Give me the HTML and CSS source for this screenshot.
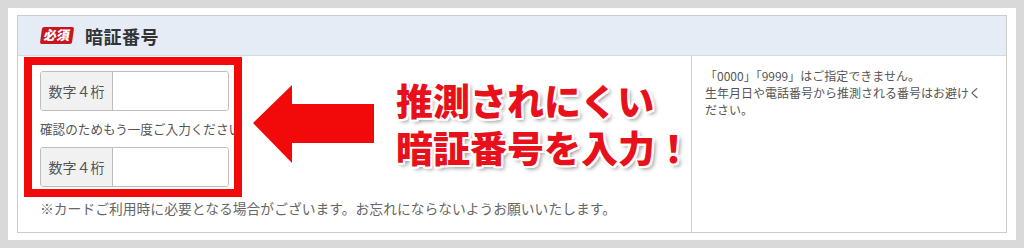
FILE: index.html
```html
<!DOCTYPE html>
<html lang="ja">
<head>
<meta charset="utf-8">
<link rel="stylesheet" href="styles.css">
</head>
<body>
<div class="page">
  <div class="sheet">
    <div class="panel">
      <div class="panel-head">
        <span class="badge">必須</span>
        <span class="title">暗証番号</span>
      </div>
      <div class="panel-body">
        <div class="form-col">
          <div class="group">
            <div class="addon">数字４桁</div>
            <div class="field"></div>
          </div>
          <div class="confirm">確認のためもう一度ご入力ください</div>
          <div class="group">
            <div class="addon">数字４桁</div>
            <div class="field"></div>
          </div>
          <div class="note">※カードご利用時に必要となる場合がございます。お忘れにならないようお願いいたします。</div>
        </div>
        <div class="help-col">
          <p>「0000」「9999」はご指定できません。<br>生年月日や電話番号から推測される番号はお避けください。</p>
        </div>
      </div>
    </div>
  </div>
  <div class="mark-box"></div>
  <svg class="mark-arrow" width="130" height="84" viewBox="0 0 130 84">
    <polygon points="0,39 39,1 39,20 121,20 121,59 39,59 39,79" fill="#f20a0a"/>
  </svg>
  <div class="mark-text">
    <div class="mark-line">推測されにくい</div>
    <div class="mark-line">暗証番号を入力！</div>
  </div>
</div>
</body>
</html>
```
FILE: styles.css
```css
* { box-sizing: border-box; }
html, body { margin: 0; padding: 0; }
body {
  background: #d9d9d9;
  font-family: "Noto Sans CJK JP", "Noto Sans", sans-serif;
}
.page {
  position: relative;
  width: 1024px;
  height: 248px;
  padding: 8px;
}
.sheet {
  background: #fff;
  height: 232px;
  padding: 7px 9px 7px 9px;
}
.panel {
  border: 1px solid #cccccc;
  height: 218px;
  display: flex;
  flex-direction: column;
}
.panel-head {
  height: 40px;
  background: #e5ecf6;
  border-bottom: 1px solid #d3d9e2;
  display: flex;
  align-items: center;
  padding-left: 23px;
  gap: 12px;
}
.badge {
  background: #c9161d;
  color: #fff;
  font-size: 13px;
  font-weight: 900;
  line-height: 16px;
  height: 17px;
  padding: 0 3px;
  border-radius: 2px;
  transform: skewX(-8deg);
}
.title {
  font-size: 18px;
  font-weight: 700;
  color: #333;
  letter-spacing: 0.5px;
}
.panel-body {
  flex: 1;
  display: flex;
}
.form-col {
  flex: 1;
  padding: 15px 22px 0 22px;
}
.group {
  display: flex;
  width: 189px;
  height: 40px;
  border: 1px solid #bdbdbd;
  border-radius: 3px;
  overflow: hidden;
}
.addon {
  width: 72px;
  background: #f1f1f1;
  border-right: 1px solid #bdbdbd;
  color: #555;
  font-size: 14px;
  display: flex;
  align-items: center;
  justify-content: center;
}
.field {
  flex: 1;
  background: #fff;
}
.confirm {
  margin: 8px 0;
  font-size: 12.6px;
  line-height: 20px;
  color: #555;
  white-space: nowrap;
}
.note {
  margin-top: 11px;
  font-size: 13.8px;
  line-height: 20px;
  color: #666;
  white-space: nowrap;
}
.help-col {
  width: 315px;
  border-left: 1px solid #cccccc;
  padding: 11px 20px 0 13px;
}
.help-col p {
  margin: 0;
  font-size: 12px;
  line-height: 17px;
  color: #555;
}
.mark-box {
  position: absolute;
  left: 24px;
  top: 57px;
  width: 218px;
  height: 140px;
  border: 8px solid #f20a0a;
}
.mark-arrow {
  position: absolute;
  left: 253px;
  top: 84px;
}
.mark-text {
  position: absolute;
  left: 396px;
  top: 77px;
  display: flex;
  flex-direction: column;
  font-family: "Noto Sans CJK JP", sans-serif;
  font-weight: 900;
  font-size: 37px;
  color: #e8111b;
  white-space: nowrap;
  text-shadow:
    2px 0 0 #fff, -2px 0 0 #fff, 0 2px 0 #fff, 0 -2px 0 #fff,
    2px 2px 0 #fff, -2px -2px 0 #fff, 2px -2px 0 #fff, -2px 2px 0 #fff,
    3px 3px 4px rgba(0,0,0,0.45);
}
.mark-line {
  height: 47px;
  line-height: 47px;
}
```
